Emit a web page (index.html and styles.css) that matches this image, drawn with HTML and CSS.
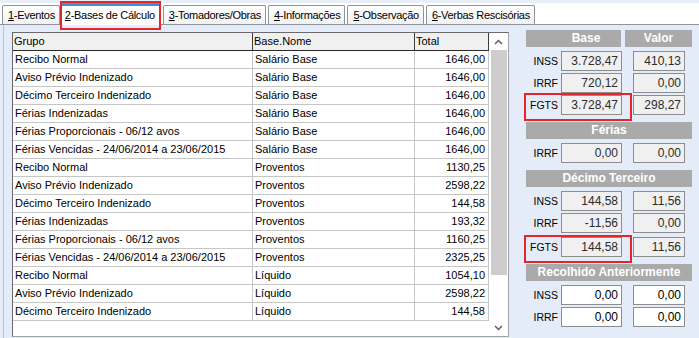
FILE: index.html
```html
<!DOCTYPE html>
<html lang="pt-BR">
<head>
    <meta charset="UTF-8">
    <title>Bases de Cálculo</title>
    <link rel="stylesheet" href="styles.css">
</head>
<body>
    <div class="tabs">
        <div class="tab"><u>1</u>-Eventos</div>
        <div class="tab active"><u>2</u>-Bases de Cálculo</div>
        <div class="tab"><u>3</u>-Tomadores/Obras</div>
        <div class="tab"><u>4</u>-Informações</div>
        <div class="tab"><u>5</u>-Observação</div>
        <div class="tab"><u>6</u>-Verbas Rescisórias</div>
    </div>

    <div class="page">
        <div class="left">
            <div class="grid">
                <table class="bases">
                    <thead>
                        <tr><th class="c1">Grupo</th><th class="c2">Base.Nome</th><th class="c3">Total</th></tr>
                    </thead>
                    <tbody>
                        <tr><td>Recibo Normal</td><td>Salário Base</td><td class="num">1646,00</td></tr>
                        <tr><td>Aviso Prévio Indenizado</td><td>Salário Base</td><td class="num">1646,00</td></tr>
                        <tr><td>Décimo Terceiro Indenizado</td><td>Salário Base</td><td class="num">1646,00</td></tr>
                        <tr><td>Férias Indenizadas</td><td>Salário Base</td><td class="num">1646,00</td></tr>
                        <tr><td>Férias Proporcionais - 06/12 avos</td><td>Salário Base</td><td class="num">1646,00</td></tr>
                        <tr><td>Férias Vencidas - 24/06/2014 a 23/06/2015</td><td>Salário Base</td><td class="num">1646,00</td></tr>
                        <tr><td>Recibo Normal</td><td>Proventos</td><td class="num">1130,25</td></tr>
                        <tr><td>Aviso Prévio Indenizado</td><td>Proventos</td><td class="num">2598,22</td></tr>
                        <tr><td>Décimo Terceiro Indenizado</td><td>Proventos</td><td class="num">144,58</td></tr>
                        <tr><td>Férias Indenizadas</td><td>Proventos</td><td class="num">193,32</td></tr>
                        <tr><td>Férias Proporcionais - 06/12 avos</td><td>Proventos</td><td class="num">1160,25</td></tr>
                        <tr><td>Férias Vencidas - 24/06/2014 a 23/06/2015</td><td>Proventos</td><td class="num">2325,25</td></tr>
                        <tr><td>Recibo Normal</td><td>Líquido</td><td class="num">1054,10</td></tr>
                        <tr><td>Aviso Prévio Indenizado</td><td>Líquido</td><td class="num">2598,22</td></tr>
                        <tr><td>Décimo Terceiro Indenizado</td><td>Líquido</td><td class="num">144,58</td></tr>
                    </tbody>
                </table>
                <div class="vscroll">
                    <div class="arrow">
                        <svg width="9" height="6" viewBox="0 0 9 6"><path d="M1 5 L4.5 1.5 L8 5" fill="none" stroke="#606060" stroke-width="1.5"/></svg>
                    </div>
                    <div class="track"><div class="thumb"></div></div>
                    <div class="arrow">
                        <svg width="9" height="6" viewBox="0 0 9 6"><path d="M1 1 L4.5 4.5 L8 1" fill="none" stroke="#606060" stroke-width="1.5"/></svg>
                    </div>
                </div>
            </div>
        </div>

        <div class="side">
            <div class="hd"><span class="hb">Base</span><span class="hv">Valor</span></div>
            <div class="row first"><span class="lbl">INSS</span><span class="box">3.728,47</span><span class="box val">410,13</span></div>
            <div class="row"><span class="lbl">IRRF</span><span class="box">720,12</span><span class="box val">0,00</span></div>
            <div class="row hl"><span class="lbl">FGTS</span><span class="box">3.728,47</span><span class="box val">298,27</span></div>

            <div class="hd full">Férias</div>
            <div class="row first"><span class="lbl">IRRF</span><span class="box">0,00</span><span class="box val">0,00</span></div>

            <div class="hd full">Décimo Terceiro</div>
            <div class="row first"><span class="lbl">INSS</span><span class="box">144,58</span><span class="box val">11,56</span></div>
            <div class="row"><span class="lbl">IRRF</span><span class="box">-11,56</span><span class="box val">0,00</span></div>
            <div class="row hl low"><span class="lbl">FGTS</span><span class="box">144,58</span><span class="box val">11,56</span></div>

            <div class="hd full">Recolhido Anteriormente</div>
            <div class="row first"><span class="lbl">INSS</span><span class="box edit">0,00</span><span class="box val edit">0,00</span></div>
            <div class="row"><span class="lbl">IRRF</span><span class="box edit">0,00</span><span class="box val edit">0,00</span></div>
        </div>
    </div>
</body>
</html>
```

FILE: styles.css
```css
* { box-sizing: border-box; }
body {
    margin: 0;
    width: 699px;
    height: 338px;
    overflow: hidden;
    background: #e3ecf8;
    font-family: "Liberation Sans", Arial, sans-serif;
    font-size: 11px;
    color: #000;
}

/* tab strip */
.tabs {
    display: flex;
    align-items: flex-end;
    height: 25px;
    padding-left: 2px;
    background: linear-gradient(#e8eff9 0, #e8eff9 3px, #fff 3px);
    border-bottom: 1px solid #8e939c;
}
.tab {
    height: 19px;
    padding: 2px 4px 0 5px;
    margin-right: 2px;
    font-size: 11px;
    letter-spacing: -0.3px;
    line-height: 15px;
    white-space: nowrap;
    border: 1px solid #8e939c;
    border-bottom: none;
    border-radius: 2px 2px 0 0;
    background: linear-gradient(#ffffff, #f1f1f1);
}
.tab:first-child { margin-right: 1px; }
.tab.active {
    position: relative;
    height: 22px;
    margin-bottom: -1px;
    padding: 2px 4px 0 3px;
    background: #fff;
    border-top: 3px solid #3d8fe0;
    margin-right: 3px;
}
.tab.active::after {
    content: "";
    position: absolute;
    top: -5px;
    left: -2px;
    right: -2px;
    bottom: -5px;
    border: 2px solid #e3262b;
}
.tab u { text-decoration: underline; }

/* page */
.page {
    display: flex;
    height: 313px;
}
.left {
    width: 513px;
    margin-left: 3px;
    padding: 7px 0 0 8px;
    border-left: 1px solid #b2c2d8;
}
.grid {
    display: flex;
    width: 497px;
    height: 305px;
    background: #fff;
    border: 1px solid;
    border-color: #6a6a6a #a3a3a3 #a3a3a3 #6a6a6a;
}
.bases {
    width: 476px;
    table-layout: fixed;
    border-collapse: separate;
    border-spacing: 0;
    align-self: flex-start;
}
.bases th, .bases td {
    padding: 0 0 0 2px;
    height: 18px;
    line-height: 17px;
    text-align: left;
    font-weight: normal;
    white-space: nowrap;
    overflow: hidden;
}
.bases th {
    background: #f0f0f0;
    border-right: 1px solid #3c3c3c;
    border-bottom: 1px solid #2a2a2a;
    padding-left: 1px;
}
.bases td {
    border-right: 1px solid #c6c6c6;
    border-bottom: 1px solid #c6c6c6;
}
.bases .c1 { width: 240px; }
.bases .c2 { width: 162px; }
.bases .c3 { width: 74px; }
.bases td.num { text-align: right; padding: 0 3px 0 0; }

.vscroll {
    display: flex;
    flex-direction: column;
    width: 19px;
    height: 303px;
}
.vscroll .arrow {
    height: 17px;
    display: flex;
    align-items: center;
    justify-content: center;
}
.vscroll .track { flex: 1; padding: 0 1px 0 2px; }
.vscroll .thumb { height: 225px; background: #cdcdcd; }

/* right panel */
.side {
    flex: 1;
    padding: 5px 0 0 10px;
}
.hd {
    display: flex;
    height: 17px;
    line-height: 17px;
    font-size: 12px;
    font-weight: bold;
    color: #fff;
    margin-bottom: 4px;
}
.hd .hb {
    width: 95px;
    padding-left: 25px;
    text-align: center;
    background: #aaaaaa;
}
.hd .hv {
    width: 67px;
    margin-left: 4px;
    text-align: center;
    background: #aaaaaa;
}
.hd.full {
    width: 166px;
    justify-content: center;
    background: #aaaaaa;
    margin-top: 7px;
}
.row {
    display: flex;
    align-items: center;
    height: 20px;
    margin-top: 2px;
}
.row.first { margin-top: 0; }
.row.low { margin-top: 4px; }
.row .lbl {
    width: 35px;
    padding-right: 3px;
    text-align: right;
    font-size: 10.5px;
}
.row .box {
    width: 61px;
    height: 20px;
    line-height: 18px;
    padding-right: 3px;
    text-align: right;
    font-size: 12px;
    color: #2c2c2c;
    background: #f0f0f0;
    border: 1px solid #8d8d8d;
}
.row .box.val { width: 52px; margin-left: 11px; }
.row .box.edit { background: #fff; color: #000; }
.row.hl { position: relative; }
.row.hl::after {
    content: "";
    position: absolute;
    left: -2px;
    top: -2px;
    width: 104px;
    height: 24px;
    border: 2px solid #e3262b;
}
```
